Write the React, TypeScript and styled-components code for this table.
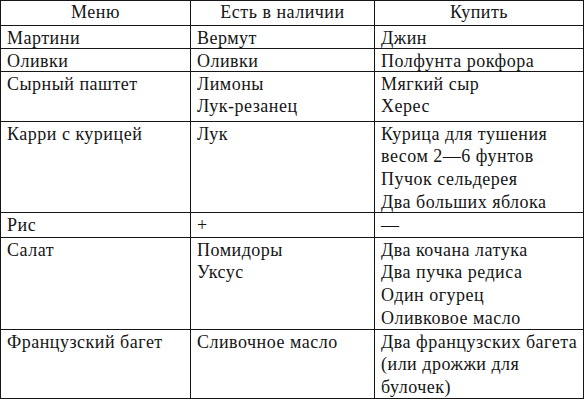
import React from "react";
import styled, { createGlobalStyle } from "styled-components";

const GlobalStyle = createGlobalStyle`
  html, body { margin: 0; padding: 0; background: #ffffff; }
  body { font-family: "Liberation Serif", serif; }
`;

const Table = styled.div<{ $rows: string }>`
  display: grid;
  grid-template-columns: 190px 184px 209px;
  grid-template-rows: ${(p) => p.$rows};
  width: 584px;
  box-sizing: border-box;
  border-top: 1px solid #161616;
  border-left: 1px solid #161616;
  color: #151515;
  font-family: "Liberation Serif", serif;
  font-size: 18px;
  letter-spacing: 0.5px;
  line-height: 22.7px;
`;

const Cell = styled.div<{ $head?: boolean }>`
  box-sizing: border-box;
  border-right: 1px solid #161616;
  border-bottom: 1px solid #161616;
  padding: ${(p) => (p.$head ? "0 4px" : "0.5px 4px 0 6px")};
  text-align: ${(p) => (p.$head ? "center" : "left")};
`;

const Line = styled.div`
  white-space: nowrap;
`;

const header = ["Меню", "Есть в наличии", "Купить"];

const rows: { h: number; cells: string[][] }[] = [
  { h: 23, cells: [["Мартини"], ["Вермут"], ["Джин"]] },
  { h: 23, cells: [["Оливки"], ["Оливки"], ["Полфунта рокфора"]] },
  { h: 50, cells: [["Сырный паштет"], ["Лимоны", "Лук-резанец"], ["Мягкий сыр", "Херес"]] },
  {
    h: 91,
    cells: [
      ["Карри с курицей"],
      ["Лук"],
      ["Курица для тушения", "весом 2—6 фунтов", "Пучок сельдерея", "Два больших яблока"],
    ],
  },
  { h: 25, cells: [["Рис"], ["+"], ["—"]] },
  {
    h: 92,
    cells: [
      ["Салат"],
      ["Помидоры", "Уксус"],
      ["Два кочана латука", "Два пучка редиса", "Один огурец", "Оливковое масло"],
    ],
  },
  {
    h: 69,
    cells: [
      ["Французский багет"],
      ["Сливочное масло"],
      ["Два французских багета", "(или дрожжи для", "булочек)"],
    ],
  },
];

export default function App() {
  const template = ["25px", ...rows.map((r) => `${r.h}px`)].join(" ");
  return (
    <>
      <GlobalStyle />
      <Table $rows={template}>
        {header.map((h) => (
          <Cell key={h} $head>
            {h}
          </Cell>
        ))}
        {rows.map((r, i) =>
          r.cells.map((c, j) => (
            <Cell key={`${i}-${j}`}>
              {c.map((l, k) => (
                <Line key={k}>{l}</Line>
              ))}
            </Cell>
          ))
        )}
      </Table>
    </>
  );
}
